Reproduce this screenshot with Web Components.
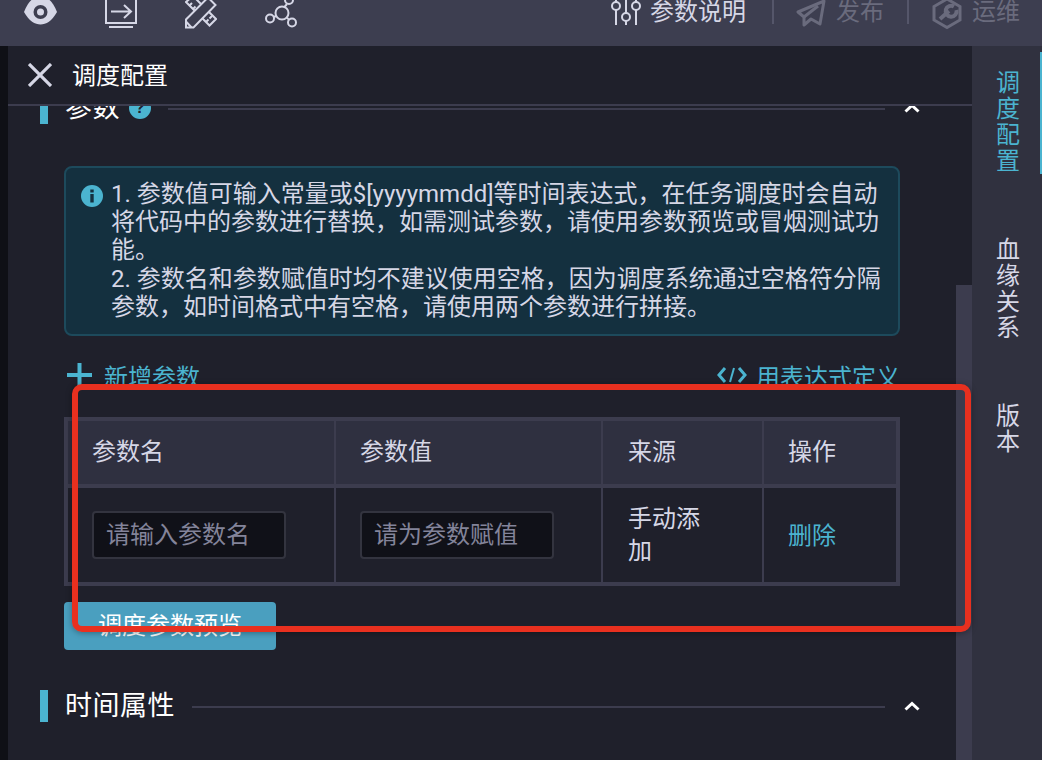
<!DOCTYPE html>
<html lang="zh">
<head>
<meta charset="utf-8">
<title>调度配置</title>
<style>
html,body{margin:0;padding:0;background:#1f202b;}
body{font-family:Roboto,"Noto Sans CJK SC",sans-serif;font-size:24px;color:#d6d7e6;}
</style>
</head>
<body>
<ide-app>
  <top-bar></top-bar>
  <left-strip></left-strip>
  <config-panel>
    <section-head title-text="参数" help></section-head>
    <info-box>1. 参数值可输入常量或$[yyyymmdd]等时间表达式，在任务调度时会自动将代码中的参数进行替换，如需测试参数，请使用参数预览或冒烟测试功能。<br>2. 参数名和参数赋值时均不建议使用空格，因为调度系统通过空格符分隔参数，如时间格式中有空格，请使用两个参数进行拼接。</info-box>
    <param-actions></param-actions>
    <param-table></param-table>
    <main-button>调度参数预览</main-button>
    <section-head title-text="时间属性" class="second"></section-head>
  </config-panel>
  <side-tabs>
    <side-tab active>调度配置</side-tab>
    <side-tab>血缘关系</side-tab>
    <side-tab style="margin-top:-1px">版本</side-tab>
  </side-tabs>
  <red-mark></red-mark>
</ide-app>

<script>
const ideApp = document.createElement('template');
ideApp.innerHTML = `
<style>
:host{
  display:grid;
  position:relative;
  width:1042px;
  height:760px;
  overflow:hidden;
  grid-template-columns:8px 964px 70px;
  grid-template-rows:46px 714px;
}
::slotted(top-bar){grid-column:1 / 4;}
</style>
<slot></slot>`;

const topBar = document.createElement('template');
topBar.innerHTML = `
<style>
:host{
  display:flex;
  height:46px;
  background:#3d3e50;
  padding:0 22px 0 24px;
  box-sizing:border-box;
  align-items:flex-start;
  overflow:hidden;
  color:#d6d7e6;
  line-height:24px;
}
svg{display:block;flex:none;height:30px;}
.left{display:flex;gap:48px;}
.right{display:flex;margin-left:auto;align-items:flex-start;}
.off{color:#6a6b7d;}
.sep{width:2px;height:24px;background:#55566a;}
span{display:block;white-space:nowrap;}
</style>
<div class="left">
  <svg width="33" viewBox="24 0 33 30">
    <path d="M24 12C29-1 36-4 40.500-4S52-1 57 12C52 21 46 24.500 40.500 24.500S29 21 24 12Z" fill="#d6d7e6"/>
    <circle cx="40.500" cy="12" r="7" fill="#3d3e50"/>
    <circle cx="40.500" cy="12" r="3.500" fill="#d6d7e6"/>
  </svg>
  <svg width="32" viewBox="104 0 32 30" fill="none" stroke="#d6d7e6" stroke-width="2">
    <path d="M105-2V23H135V-2"/>
    <path d="M108 27H132"/>
    <path d="M110 11.500H130M123 5L130 11.500L123 18"/>
  </svg>
  <svg width="32" viewBox="184 0 32 30" fill="none" stroke="#d6d7e6" stroke-width="2">
    <path d="M193.750 10.750L185 2L192-4L200.250 4.250M201.500 18.500L208.500 25.500L215 19L208 12"/>
    <path d="M188.500 5.500L191 3M192 9L194.500 6.500M205 22L207.500 19.500M208.500 18.500L211 16"/>
    <path d="M185 27.500V19.500L207-2.500L214.500 5L192.500 27.500Z"/>
    <path d="M185 21.500L190.500 27.500"/>
  </svg>
  <svg width="32" viewBox="264 0 32 30" fill="none" stroke="#d6d7e6" stroke-width="2">
    <circle cx="281" cy="13" r="6.500"/>
    <circle cx="269" cy="18.500" r="4"/>
    <circle cx="291" cy="22.500" r="4"/>
    <circle cx="288" cy="0" r="4"/>
    <path d="M273 17L275 16M286 17.500L288 20M283.500 7L286 4"/>
  </svg>
</div>
<div class="right">
  <svg width="30" viewBox="612 0 30 30" fill="none" stroke="#d6d7e6" stroke-width="2" style="margin-right:9px">
    <path d="M617-2V2M617 10V25M627-2V13M627 21V25M637-2V2M637 10V25"/>
    <circle cx="617" cy="6" r="4"/>
    <circle cx="627" cy="17" r="4"/>
    <circle cx="637" cy="6" r="4"/>
  </svg>
  <span>参数说明</span>
  <div class="sep" style="margin:0 22px 0 26px"></div>
  <svg width="30" viewBox="797 0 30 30" fill="none" stroke="#6a6b7d" stroke-width="3" stroke-linejoin="round" style="margin-right:10px">
    <path d="M799 12L825 1L821 24L812 19L805 25V17Z"/>
    <path d="M805 17L819 6"/>
  </svg>
  <span class="off">发布</span>
  <div class="sep" style="margin:0 23px"></div>
  <svg width="30" viewBox="933 0 30 30" fill="none" stroke="#6a6b7d" stroke-width="3" style="margin-right:10px">
    <path d="M948-1L961 6.500V20L948 27.500L935 20V6.500Z"/>
    <path d="M941 19L950 11" stroke-width="4"/>
    <path d="M955 6.500A5.500 5.500 0 1 0 957.500 10" stroke-width="4"/>
  </svg>
  <span class="off">运维</span>
</div>`;

const leftStrip = document.createElement('template');
leftStrip.innerHTML = `<style>:host{display:block;background:#0f1016;}</style>`;

const configPanel = document.createElement('template');
configPanel.innerHTML = `
<style>
:host{
  display:flex;
  flex-direction:column;
  background:#1f202b;
  overflow:hidden;
  min-width:0;
}
.head{
  display:flex;
  align-items:center;
  flex:none;
  height:58px;
  gap:20px;
  padding:0 0 0 20px;
  border-bottom:2px solid #3c3c4e;
  color:#fff;
}
.head svg{display:block;margin-top:-1px;}
.head span{padding-bottom:4px;}
.main{display:flex;flex:1;min-height:0;}
.scroll{flex:1;overflow:hidden;padding:0 36px 0 32px;}
.inner{margin-top:-14px;display:flex;flex-direction:column;align-items:flex-start;}
.track{width:16px;flex:none;padding-top:179px;box-sizing:border-box;}
.thumb{height:100%;background:#3c3c4e;}
</style>
<div class="head">
  <svg width="24" height="24" viewBox="0 0 24 24" fill="none" stroke="#d6d7e6" stroke-width="3.200">
    <path d="M1 1L23 23M23 1L1 23"/>
  </svg>
  <span>调度配置</span>
</div>
<div class="main">
  <div class="scroll"><div class="inner"><slot></slot></div></div>
  <div class="track"><div class="thumb"></div></div>
</div>`;

const sectionHead = document.createElement('template');
sectionHead.innerHTML = `
<style>
:host{
  display:flex;
  align-items:center;
  align-self:stretch;
  height:32px;
  flex:none;
}
:host(.second){margin-top:40px;}
.bar{width:8px;height:32px;background:#4bb4d0;margin-right:17px;flex:none;}
.title{color:#fff;font-size:27px;line-height:32px;white-space:nowrap;letter-spacing:.5px;}
.help{display:none;width:22px;height:22px;border-radius:50%;background:#4bb4d0;margin-left:9px;flex:none;
  color:#1f202b;font:700 16px/22px "Liberation Sans",sans-serif;text-align:center;}
:host([help]) .help{display:block;}
.rule{flex:1;height:2px;background:#3c3c4e;margin:2px 19px 0 17px;}
svg{display:block;flex:none;}
</style>
<div class="bar"></div>
<span class="title"></span>
<span class="help">?</span>
<div class="rule"></div>
<svg width="16" height="10" viewBox="0 0 16 10" fill="none" stroke="#fff" stroke-width="3"><path d="M1.500 8.500L8 2.500L14.500 8.500"/></svg>`;

const infoBox = document.createElement('template');
infoBox.innerHTML = `
<style>
:host{
  display:flex;
  flex:none;
  width:836px;
  height:170px;
  box-sizing:border-box;
  margin:42px 0 0 24px;
  padding:12px 14px 0 15px;
  background:#14303f;
  border:2px solid #1d4a5c;
  border-radius:8px;
  line-height:28.200px;
  color:#d6d7e6;
}
svg{display:block;flex:none;margin:5px 8px 0 0;}
</style>
<svg width="22" height="22" viewBox="0 0 22 22">
  <circle cx="11" cy="11" r="11" fill="#4bb4d0"/>
  <rect x="9.300" y="9" width="3.400" height="8.500" fill="#14303f"/>
  <rect x="9.300" y="4.500" width="3.400" height="3" fill="#14303f"/>
</svg>
<div><slot></slot></div>`;

const paramActions = document.createElement('template');
paramActions.innerHTML = `
<style>
:host{
  display:flex;
  align-items:center;
  flex:none;
  width:836px;
  height:32px;
  margin:23px 0 26px 24px;
  color:#4bb4d0;
  white-space:nowrap;
}
svg{display:block;flex:none;}
.add{display:flex;align-items:center;gap:12px;}
.expr{display:flex;align-items:center;gap:9px;margin-left:auto;}
</style>
<div class="add">
  <svg width="28" height="26" viewBox="0 0 28 26" fill="none" stroke="#4bb4d0" stroke-width="4"><path d="M3 13H28M15.500 1V25"/></svg>
  <span>新增参数</span>
</div>
<div class="expr">
  <svg width="30" height="20" viewBox="0 0 30 20" fill="none" stroke="#4bb4d0" stroke-width="3"><path d="M8 3L2 10L8 17M22 3L28 10L22 17"/><path d="M17 3L13 17" stroke-width="2"/></svg>
  <span>用表达式定义</span>
</div>`;

const paramTable = document.createElement('template');
paramTable.innerHTML = `
<style>
:host{
  display:grid;
  flex:none;
  width:836px;
  box-sizing:border-box;
  margin-left:24px;
  padding:4px;
  background:#3c3c4e;
  grid-template-columns:266px 265px 159px 132px;
  grid-template-rows:63px 94px;
  column-gap:2px;
  row-gap:4px;
}
.c{display:flex;align-items:center;padding-left:24px;background:#1f202b;min-width:0;}
.h{background:#2f3040;padding-bottom:6px;box-sizing:border-box;}
.third{padding-left:25px;}
.src{width:90px;line-height:32px;}
.link{color:#4bb4d0;padding-bottom:4px;}
</style>
<div class="c h">参数名</div>
<div class="c h">参数值</div>
<div class="c h third">来源</div>
<div class="c h">操作</div>
<div class="c"><param-input>请输入参数名</param-input></div>
<div class="c"><param-input>请为参数赋值</param-input></div>
<div class="c third"><span class="src">手动添加</span></div>
<div class="c"><span class="link">删除</span></div>`;

const paramInput = document.createElement('template');
paramInput.innerHTML = `
<style>
:host{
  display:block;
  width:194px;
  height:48px;
  box-sizing:border-box;
  padding-left:12px;
  background:#101118;
  border:2px solid #33343f;
  border-radius:4px;
  color:#83849a;
  line-height:44px;
  white-space:nowrap;
}
</style>
<slot></slot>`;

const mainButton = document.createElement('template');
mainButton.innerHTML = `
<style>
:host{
  display:block;
  flex:none;
  width:212px;
  height:48px;
  margin:16px 0 0 24px;
  background:#4a9fbf;
  border-radius:4px;
  color:#fff;
  line-height:48px;
  text-align:center;
  white-space:nowrap;
}
</style>
<slot></slot>`;

const sideTabs = document.createElement('template');
sideTabs.innerHTML = `
<style>
:host{
  display:flex;
  flex-direction:column;
  background:#30313f;
  padding-top:6px;
  gap:45px;
}
</style>
<slot></slot>`;

const sideTab = document.createElement('template');
sideTab.innerHTML = `
<style>
:host{
  display:block;
  padding:18px 0 0 24px;
  border-right:2px solid transparent;
  line-height:26px;
  color:#d6d7e6;
}
:host([active]){color:#4bb4d0;border-right-color:#4bb4d0;}
div{width:24px;word-break:break-all;}
</style>
<div><slot></slot></div>`;

const redMark = document.createElement('template');
redMark.innerHTML = `
<style>
:host{
  display:block;
  position:absolute;
  left:72px;
  top:384px;
  width:899px;
  height:248px;
  box-sizing:border-box;
  border:6px solid #e8301f;
  border-radius:10px;
  box-shadow:0 1px 6px rgba(0,0,0,.35);
  pointer-events:none;
}
</style>`;

class Base extends HTMLElement{
  constructor(tpl){
    super();
    this.attachShadow({mode:'open'});
    this.shadowRoot.appendChild(tpl.content.cloneNode(true));
  }
}
class SectionHead extends Base{
  constructor(){super(sectionHead);}
  connectedCallback(){
    this.shadowRoot.querySelector('.title').textContent = this.getAttribute('title-text');
  }
}

window.customElements.define('ide-app',class extends Base{constructor(){super(ideApp);}});
window.customElements.define('top-bar',class extends Base{constructor(){super(topBar);}});
window.customElements.define('left-strip',class extends Base{constructor(){super(leftStrip);}});
window.customElements.define('config-panel',class extends Base{constructor(){super(configPanel);}});
window.customElements.define('section-head',SectionHead);
window.customElements.define('info-box',class extends Base{constructor(){super(infoBox);}});
window.customElements.define('param-actions',class extends Base{constructor(){super(paramActions);}});
window.customElements.define('param-table',class extends Base{constructor(){super(paramTable);}});
window.customElements.define('param-input',class extends Base{constructor(){super(paramInput);}});
window.customElements.define('main-button',class extends Base{constructor(){super(mainButton);}});
window.customElements.define('side-tabs',class extends Base{constructor(){super(sideTabs);}});
window.customElements.define('side-tab',class extends Base{constructor(){super(sideTab);}});
window.customElements.define('red-mark',class extends Base{constructor(){super(redMark);}});
</script>
</body>
</html>
